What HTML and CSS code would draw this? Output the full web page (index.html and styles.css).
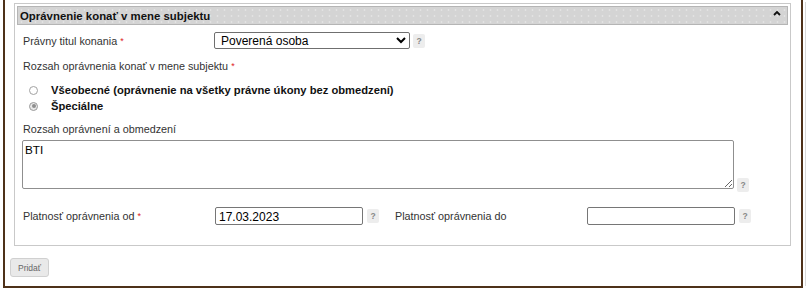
FILE: index.html
```html
<!DOCTYPE html>
<html lang="sk">
<head>
<meta charset="utf-8">
<title>Oprávnenie konať v mene subjektu</title>
<link rel="stylesheet" href="styles.css">
</head>
<body>
<div class="frame">
  <div class="box">
    <div class="box-head">
      <span class="box-title">Oprávnenie konať v mene subjektu</span>
      <svg class="caret" width="8" height="6" viewBox="0 0 8 6"><polyline points="1,5 4,2 7,5" fill="none" stroke="#111" stroke-width="1.8"/></svg>
    </div>
    <div class="body">
      <div class="row row-select">
        <label class="lbl">Právny titul konania <span class="req">*</span></label>
        <select class="sel"><option>Poverená osoba</option></select>
        <span class="help">?</span>
      </div>
      <div class="lbl line2">Rozsah oprávnenia konať v mene subjektu <span class="req">*</span></div>
      <div class="radios">
        <div class="radio-row"><span class="radio"></span><span class="rlabel">Všeobecné (oprávnenie na všetky právne úkony bez obmedzení)</span></div>
        <div class="radio-row"><span class="radio checked"></span><span class="rlabel">Špeciálne</span></div>
      </div>
      <div class="lbl line3">Rozsah oprávnení a obmedzení</div>
      <div class="ta-row">
        <textarea class="ta">BTI</textarea>
        <span class="help">?</span>
      </div>
      <div class="row date-row">
        <div class="date-group">
          <label class="lbl">Platnosť oprávnenia od <span class="req">*</span></label>
          <input class="inp" type="text" value="17.03.2023">
          <span class="help">?</span>
        </div>
        <div class="date-group">
          <label class="lbl">Platnosť oprávnenia do</label>
          <input class="inp" type="text" value="">
          <span class="help">?</span>
        </div>
      </div>
    </div>
  </div>
  <button class="btn" type="button">Pridať</button>
</div>
</body>
</html>
```
FILE: styles.css
```css
html, body {
  margin: 0;
  padding: 0;
  background: #fff;
}
body {
  font-family: "Liberation Sans", Arial, sans-serif;
  color: #222;
  width: 808px;
  height: 294px;
  overflow: hidden;
}
.frame {
  margin-left: 3px;
  width: 796px;
  height: 283px;
  padding: 3px 0 0 0;
  border: 2px solid #4e3119;
  border-top: 0;
  box-shadow: 4px 0 0 -2px #fff, 5px 0 0 -2px #d8d8d8;
  box-sizing: content-box;
}
.box {
  margin-left: 9px;
  width: 772px;
  height: 239px;
  border: 1px solid #c9c9c9;
  padding: 2px 2px 0 1px;
  box-sizing: content-box;
}
.box-head {
  height: 17px;
  margin-left: 1px;
  border: 1px solid #b5b5b5;
  background-color: #d4d4d4;
  background-image: radial-gradient(circle, #e2e2e2 0.8px, transparent 1.2px);
  background-size: 7px 6px;
  display: flex;
  align-items: center;
  justify-content: space-between;
  padding: 0 6px 0 2px;
}
.box-title {
  font-weight: bold;
  font-size: 11.4px;
  color: #111;
}
.caret {
  display: block;
  margin-top: -5px;
}
.body {
  padding-left: 7px;
}
.lbl {
  font-size: 10.8px;
  color: #333;
}
.req {
  color: #d22;
  font-size: 9px;
  position: relative;
  top: -1px;
}
.row {
  display: flex;
  align-items: center;
}
.row-select {
  margin-top: 7px;
  height: 17px;
}
.row-select .lbl {
  width: 191px;
}
.sel {
  width: 196px;
  height: 17px;
  font-family: "Liberation Sans", Arial, sans-serif;
  font-size: 12px;
  color: #000;
  border: 1px solid #6f6f6f;
  border-radius: 2px;
  padding: 0 0 0 2px;
  background: #fff;
  margin: 0;
}
.help {
  display: inline-flex;
  align-items: center;
  justify-content: center;
  width: 12px;
  height: 14px;
  margin-left: 3px;
  background: #ededed;
  border-radius: 2px;
  font-size: 8.5px;
  font-weight: bold;
  color: #888;
}
.line2 {
  margin-top: 9px;
  height: 17px;
  line-height: 17px;
}
.radios {
  margin-top: 7px;
  padding-left: 6px;
}
.radio-row {
  display: flex;
  align-items: center;
  height: 16px;
}
.radio {
  width: 7px;
  height: 7px;
  border: 1px solid #a2a2a2;
  border-radius: 50%;
  background: #fff;
  margin-right: 13px;
  position: relative;
}
.radio.checked {
  border-color: #9a9a9a;
  background: #e8e8e8;
}
.radio.checked::after {
  content: "";
  position: absolute;
  left: 1.5px;
  top: 1.5px;
  width: 4px;
  height: 4px;
  border-radius: 50%;
  background: #8e8e8e;
}
.rlabel {
  font-weight: bold;
  font-size: 11.2px;
  color: #111;
}
.line3 {
  margin-top: 7px;
  height: 16px;
  line-height: 16px;
}
.ta-row {
  margin-top: 3px;
  display: flex;
  align-items: flex-end;
}
.ta {
  display: block;
  margin: 0 0 0 -1px;
  width: 712px;
  height: 49px;
  box-sizing: border-box;
  border: 1px solid #8f8f8f;
  border-radius: 2px;
  padding: 2px 2px;
  font-family: "Liberation Sans", Arial, sans-serif;
  font-size: 11.7px;
  color: #000;
  resize: both;
}
.ta-row .help {
  margin-left: 3px;
  margin-bottom: -3px;
}
.date-row {
  margin-top: 18px;
  height: 18px;
}
.date-group {
  display: flex;
  align-items: center;
  width: 372px;
}
.date-group .lbl {
  width: 192px;
}
.inp {
  width: 148px;
  height: 18px;
  box-sizing: border-box;
  border: 1px solid #767676;
  border-radius: 2px;
  padding: 1px 3px 0;
  margin: 0;
  font-family: "Liberation Sans", Arial, sans-serif;
  font-size: 12px;
  color: #000;
}
.date-group .help {
  margin-left: 4px;
}
.btn {
  display: block;
  margin: 12px 0 0 5px;
  width: 39px;
  height: 19px;
  padding: 0;
  border: 1px solid #d0d0d0;
  border-radius: 3px;
  background: #e9e9e9;
  font-family: "Liberation Sans", Arial, sans-serif;
  font-size: 8.5px;
  color: #666;
}
```
